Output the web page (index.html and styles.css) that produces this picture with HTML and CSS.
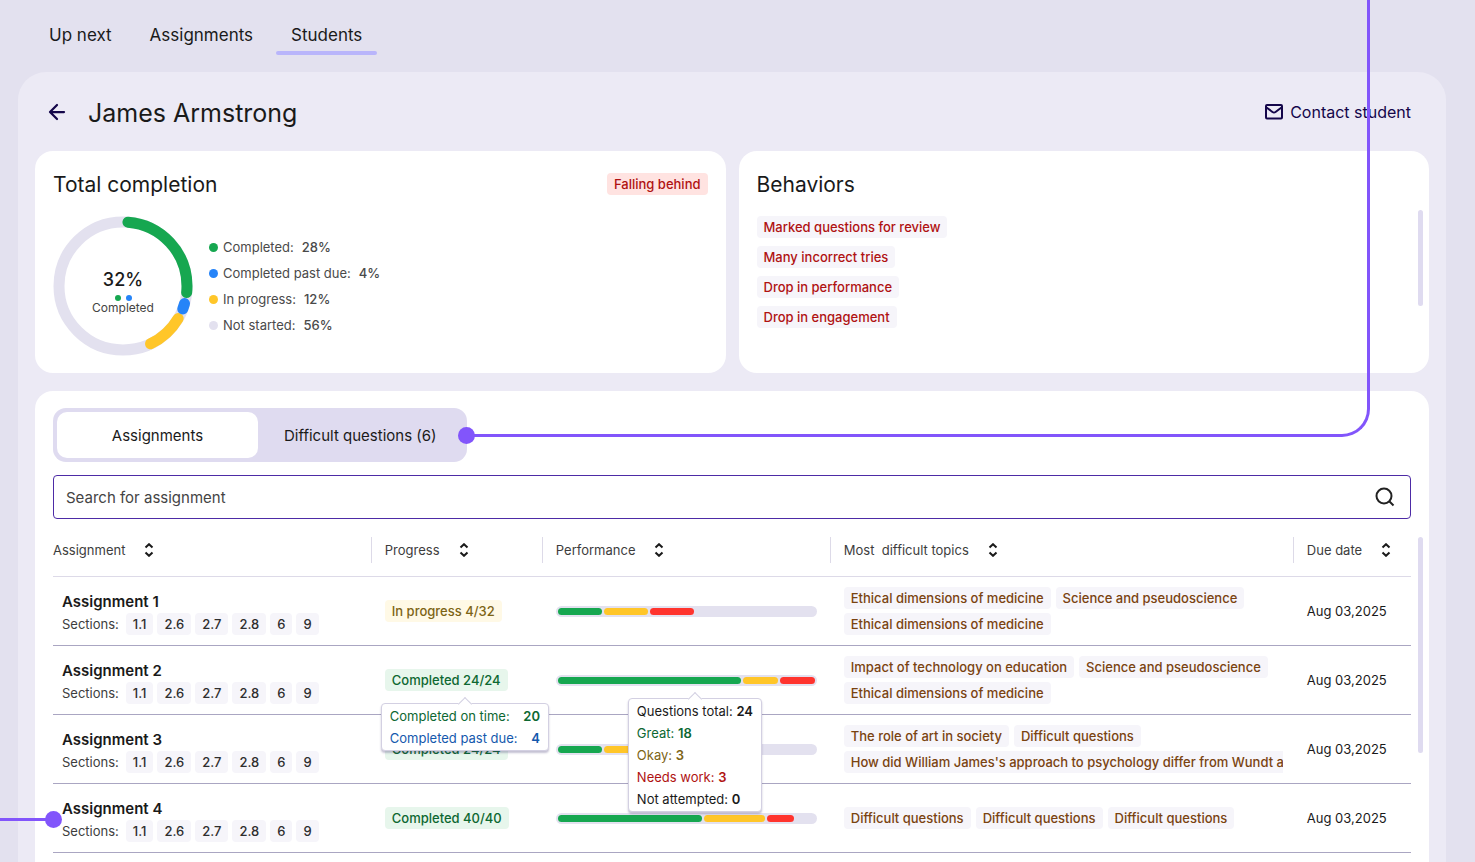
FILE: index.html
```html
<!DOCTYPE html>
<html lang="en">
<head>
    <meta charset="UTF-8">
    <meta name="viewport" content="width=device-width, initial-scale=1.0">
    <title>James Armstrong - Students</title>
    <link rel="stylesheet" href="styles.css">
</head>
<body>
    <svg class="sprite" aria-hidden="true">
        <symbol id="icon-sort" viewBox="0 0 10 14">
            <path d="M1.5 4.5 5 1.2l3.500 3.300M1.500 9.500 5 12.800l3.500-3.300" fill="none" stroke="currentColor" stroke-width="2"/>
        </symbol>
    </svg>

    <nav class="main-nav">
        <a href="#">Up next</a>
        <a href="#">Assignments</a>
        <a href="#" class="active">Students</a>
    </nav>

    <main class="panel">
        <header class="panel-header">
            <button class="back-btn" aria-label="Back">
                <svg width="18" height="18" viewBox="0 0 18 18" fill="none" stroke="currentColor" stroke-width="2.250" stroke-linecap="round" stroke-linejoin="round">
                    <path d="M16 9H2M9 2 2 9l7 7"/>
                </svg>
            </button>
            <h1>James Armstrong</h1>
            <a href="#" class="contact">
                <svg width="18" height="16" viewBox="0 0 18 16" fill="none" stroke="currentColor" stroke-width="2" stroke-linejoin="round">
                    <rect x="1" y="1" width="16" height="13.500" rx="1"/>
                    <path d="M1.500 3.500 7.500 8q1.500 1 3 0l6-4.500"/>
                </svg>
                Contact student
            </a>
        </header>

        <div class="summary">
            <section class="card">
                <div class="card-title">
                    <h2>Total completion</h2>
                    <span class="tag behind">Falling behind</span>
                </div>
                <div class="completion">
                    <div class="donut">
                        <svg width="140" height="140" viewBox="0 0 140 140" fill="none" stroke-width="11" stroke-linecap="round">
                            <circle cx="70" cy="70" r="64" stroke="#e3e1ef"/>
                            <g transform="rotate(-90 70 70)">
                                <circle cx="70" cy="70" r="64" pathLength="360" stroke="#ffc629" stroke-dasharray="34 326" stroke-dashoffset="-120.500"/>
                                <circle cx="70" cy="70" r="64" pathLength="360" stroke="#2684f8" stroke-dasharray="5 355" stroke-dashoffset="-106"/>
                                <circle cx="70" cy="70" r="64" pathLength="360" stroke="#16a750" stroke-dasharray="91.500 268.500" stroke-dashoffset="-4.500"/>
                            </g>
                        </svg>
                        <div class="donut-label">
                            <strong>32%</strong>
                            <div class="donut-dots"><i class="green"></i><i class="blue"></i></div>
                            <span>Completed</span>
                        </div>
                    </div>
                    <ul class="legend">
                        <li><i class="green"></i>Completed: <b>28%</b></li>
                        <li><i class="blue"></i>Completed past due: <b>4%</b></li>
                        <li><i class="yellow"></i>In progress: <b>12%</b></li>
                        <li><i class="grey"></i>Not started: <b>56%</b></li>
                    </ul>
                </div>
            </section>

            <section class="card">
                <div class="card-title">
                    <h2>Behaviors</h2>
                </div>
                <div class="behaviors">
                    <span class="tag">Marked questions for review</span>
                    <span class="tag">Many incorrect tries</span>
                    <span class="tag">Drop in performance</span>
                    <span class="tag">Drop in engagement</span>
                </div>
                <div class="scroll-thumb thumb-behaviors"></div>
            </section>
        </div>

        <section class="card work">
            <div class="segmented">
                <button class="selected">Assignments</button>
                <button>Difficult questions (6)</button>
            </div>

            <div class="search">
                <input type="text" placeholder="Search for assignment" aria-label="Search for assignment">
                <svg width="20" height="20" viewBox="0 0 20 20" fill="none" stroke="#222" stroke-width="2">
                    <circle cx="9" cy="9" r="7.500"/>
                    <path d="m14 14 4.500 4.500"/>
                </svg>
            </div>

            <table>
                <colgroup>
                    <col class="col-assignment">
                    <col class="col-progress">
                    <col class="col-performance">
                    <col class="col-topics">
                    <col class="col-due">
                </colgroup>
                <thead>
                    <tr>
                        <th><button class="sort">Assignment <svg><use href="#icon-sort"/></svg></button></th>
                        <th><button class="sort">Progress <svg><use href="#icon-sort"/></svg></button></th>
                        <th><button class="sort">Performance <svg><use href="#icon-sort"/></svg></button></th>
                        <th><button class="sort">Most&nbsp; difficult topics <svg><use href="#icon-sort"/></svg></button></th>
                        <th><button class="sort">Due date <svg><use href="#icon-sort"/></svg></button></th>
                    </tr>
                </thead>
                <tbody>
                    <tr>
                        <td class="assignment">
                            <h3>Assignment 1</h3>
                            <div class="sections"><span class="label">Sections:</span><span class="tag">1.1</span><span class="tag">2.6</span><span class="tag">2.7</span><span class="tag">2.8</span><span class="tag">6</span><span class="tag">9</span></div>
                        </td>
                        <td><span class="tag pending">In progress 4/32</span></td>
                        <td>
                            <div class="bar">
                                <i class="green" style="width: 17.1%"></i>
                                <i class="yellow" style="width: 17.1%"></i>
                                <i class="red" style="width: 17.1%"></i>
                            </div>
                        </td>
                        <td class="topics-cell">
                            <div class="topics">
                                <span class="tag">Ethical dimensions of medicine</span>
                                <span class="tag">Science and pseudoscience</span>
                                <span class="tag">Ethical dimensions of medicine</span>
                            </div>
                        </td>
                        <td>Aug 03,2025</td>
                    </tr>
                    <tr>
                        <td class="assignment">
                            <h3>Assignment 2</h3>
                            <div class="sections"><span class="label">Sections:</span><span class="tag">1.1</span><span class="tag">2.6</span><span class="tag">2.7</span><span class="tag">2.8</span><span class="tag">6</span><span class="tag">9</span></div>
                        </td>
                        <td>
                            <div class="anchor">
                                <span class="tag done">Completed 24/24</span>
                                <div class="tooltip tip-progress">
                                    <p class="text-green">Completed on time: <b>20</b></p>
                                    <p class="text-blue">Completed past due: <b>4</b></p>
                                </div>
                            </div>
                        </td>
                        <td>
                            <div class="anchor">
                                <div class="bar">
                                    <i class="green" style="width: 71.2%"></i>
                                    <i class="yellow" style="width: 13.6%"></i>
                                    <i class="red" style="width: 13.6%"></i>
                                </div>
                                <div class="tooltip tip-performance">
                                    <p>Questions total: <b>24</b></p>
                                    <p class="text-green">Great: <b>18</b></p>
                                    <p class="text-yellow">Okay: <b>3</b></p>
                                    <p class="text-red">Needs work: <b>3</b></p>
                                    <p>Not attempted: <b>0</b></p>
                                </div>
                            </div>
                        </td>
                        <td class="topics-cell">
                            <div class="topics">
                                <span class="tag">Impact of technology on education</span>
                                <span class="tag">Science and pseudoscience</span>
                                <span class="tag">Ethical dimensions of medicine</span>
                            </div>
                        </td>
                        <td>Aug 03,2025</td>
                    </tr>
                    <tr>
                        <td class="assignment">
                            <h3>Assignment 3</h3>
                            <div class="sections"><span class="label">Sections:</span><span class="tag">1.1</span><span class="tag">2.6</span><span class="tag">2.7</span><span class="tag">2.8</span><span class="tag">6</span><span class="tag">9</span></div>
                        </td>
                        <td><span class="tag done">Completed 24/24</span></td>
                        <td>
                            <div class="bar">
                                <i class="green" style="width: 17.1%"></i>
                                <i class="yellow" style="width: 17.1%"></i>
                                <i class="red" style="width: 17.1%"></i>
                            </div>
                        </td>
                        <td class="topics-cell">
                            <div class="topics">
                                <span class="tag">The role of art in society</span>
                                <span class="tag">Difficult questions</span>
                                <span class="tag">How did William James's approach to psychology differ from Wundt a</span>
                            </div>
                        </td>
                        <td>Aug 03,2025</td>
                    </tr>
                    <tr>
                        <td class="assignment">
                            <h3>Assignment 4</h3>
                            <div class="sections"><span class="label">Sections:</span><span class="tag">1.1</span><span class="tag">2.6</span><span class="tag">2.7</span><span class="tag">2.8</span><span class="tag">6</span><span class="tag">9</span></div>
                            <div class="callout-row"></div>
                        </td>
                        <td><span class="tag done">Completed 40/40</span></td>
                        <td>
                            <div class="bar">
                                <i class="green" style="width: 56%"></i>
                                <i class="yellow" style="width: 24%"></i>
                                <i class="red" style="width: 10.2%"></i>
                            </div>
                        </td>
                        <td class="topics-cell">
                            <div class="topics">
                                <span class="tag">Difficult questions</span>
                                <span class="tag">Difficult questions</span>
                                <span class="tag">Difficult questions</span>
                            </div>
                        </td>
                        <td>Aug 03,2025</td>
                    </tr>
                </tbody>
            </table>
            <div class="scroll-thumb thumb-table"></div>
        </section>
    </main>

    <div class="callout-tab"></div>
</body>
</html>
```

FILE: styles.css
```css
* {
    box-sizing: border-box;
}

body {
    margin: 0;
    min-height: 100vh;
    display: flex;
    flex-direction: column;
    position: relative;
    background: #e3e1ef;
    color: #1a1a1a;
    font-family: Inter, 'Open Sans', sans-serif;
    font-size: 13px;
    line-height: 22px;
}

h1, h2, h3, p, ul {
    margin: 0;
    padding: 0;
    font-weight: 400;
}

button {
    border: none;
    background: none;
    padding: 0;
    font: inherit;
    color: inherit;
    cursor: pointer;
}

a {
    color: inherit;
    text-decoration: none;
}

b {
    font-weight: 600;
}

.sprite {
    display: none;
}

/* shared colours for dots and bar segments */
.green { background: #16a750; }
.blue { background: #2684f8; }
.yellow { background: #ffc629; }
.red { background: #ff342e; }
.grey { background: #e3e1ef; }

.text-green { color: #0d6832; }
.text-blue { color: #1459ad; }
.text-yellow { color: #7d6415; }
.text-red { color: #b01212; }

.main-nav {
    display: flex;
    gap: 8px;
    padding: 22px 34px 17px;
    font-size: 17px;
    line-height: 26px;
}

.main-nav a {
    padding: 0 15px;
    position: relative;
    height: 33px;
}

.main-nav .active::after {
    content: '';
    position: absolute;
    left: 0;
    right: 0;
    bottom: 0;
    height: 4px;
    border-radius: 2px;
    background: #b9b5fb;
}

.panel {
    flex: 1;
    display: flex;
    flex-direction: column;
    margin: 0 29px 0 18px;
    padding: 0 17px;
    background: #eceaf5;
    border-radius: 28px 28px 0 0;
}

.panel-header {
    display: flex;
    align-items: center;
    height: 79px;
    padding: 4px 18px 4px 13px;
}

.back-btn, .contact {
    display: flex;
    color: #14064a;
}

h1 {
    margin-left: 22px;
    padding-top: 2px;
    font-size: 25px;
    line-height: 36px;
}

.contact {
    margin-left: auto;
    align-items: center;
    gap: 7px;
    font-size: 16px;
}

.summary {
    display: grid;
    grid-template-columns: 1fr 1fr;
    gap: 13px;
    margin-bottom: 18px;
}

.card {
    position: relative;
    padding: 17px 18px;
    background: #fff;
    border-radius: 18px;
}

.card-title {
    display: flex;
    justify-content: space-between;
    align-items: center;
    height: 32px;
}

h2 {
    padding-top: 2px;
    font-size: 21px;
    line-height: 32px;
}

.tag {
    display: inline-block;
    padding: 0 7px;
    border-radius: 4px;
    background: #f6f5fa;
    font-weight: 500;
    white-space: nowrap;
}

.behind {
    background: #ffe3e1;
    color: #b01212;
}

.completion {
    display: flex;
    gap: 16px;
    align-items: center;
    margin-top: 16px;
}

.donut {
    display: grid;
    place-items: center;
}

.donut > * {
    grid-area: 1 / 1;
}

.donut-label {
    display: flex;
    flex-direction: column;
    align-items: center;
    padding-top: 10px;
    font-size: 12px;
    line-height: 14px;
    color: #444;
}

.donut-label strong {
    font-size: 18px;
    line-height: 24px;
    font-weight: 500;
    color: #1a1a1a;
}

.donut-dots {
    display: flex;
    gap: 5px;
    margin-top: 3px;
}

.donut-dots i {
    width: 6px;
    height: 6px;
    border-radius: 50%;
}

.legend {
    list-style: none;
    color: #4a4a4a;
}

.legend li {
    display: flex;
    align-items: center;
    gap: 5px;
    line-height: 26px;
}

.legend i {
    width: 9px;
    height: 9px;
    border-radius: 50%;
}

.legend b {
    margin-left: 3px;
    font-weight: 500;
}

.behaviors {
    display: flex;
    flex-direction: column;
    align-items: flex-start;
    gap: 8px;
    margin-top: 16px;
    color: #b01212;
}

.scroll-thumb {
    position: absolute;
    right: 6px;
    width: 5px;
    border-radius: 3px;
    background: #dfdbf0;
}

.thumb-behaviors {
    top: 59px;
    height: 96px;
}

.thumb-table {
    top: 146px;
    height: 216px;
}

.work {
    flex: 1;
    padding-bottom: 8px;
    border-radius: 18px 18px 0 0;
}

.segmented {
    display: inline-flex;
    padding: 4px;
    border-radius: 13px;
    background: #dfdbf0;
    font-size: 15px;
}

.segmented button {
    min-width: 201px;
    height: 46px;
    padding: 2px 26px 0;
    border-radius: 10px;
}

.segmented .selected {
    background: #fff;
}

.search {
    display: flex;
    align-items: center;
    height: 44px;
    margin-top: 13px;
    padding: 0 15px 0 12px;
    border: 1px solid #4d2ba6;
    border-radius: 4px;
}

.search input {
    flex: 1;
    border: none;
    outline: none;
    padding: 2px 0 0;
    background: none;
    font: inherit;
    font-size: 15px;
}

.search input::placeholder {
    color: #444;
    opacity: 1;
}

table {
    width: 100%;
    table-layout: fixed;
    border-collapse: collapse;
}

.col-assignment { width: 23.4%; }
.col-progress { width: 12.6%; }
.col-performance { width: 21.2%; }
.col-topics { width: 34.1%; }
.col-due { width: 8.7%; }

th {
    padding: 18px 0 13px;
    border-bottom: 1px solid #dddae8;
    text-align: left;
    font-weight: 400;
    color: #3d3d3d;
}

.sort {
    display: flex;
    align-items: center;
    gap: 19px;
    height: 26px;
    white-space: nowrap;
}

.sort svg {
    width: 10px;
    height: 14px;
    color: #1a1a1a;
}

th + th .sort {
    padding-left: 13px;
    border-left: 1px solid #dddae8;
}

td {
    height: 69px;
    padding: 0 13px 0 14px;
    border-bottom: 1px solid #aaa6c2;
}

td:last-child {
    padding-right: 0;
}

.topics-cell {
    padding-right: 10px;
}

.assignment {
    position: relative;
    padding: 3px 0 0 9px;
}

h3 {
    font-size: 15px;
    font-weight: 600;
}

.sections {
    display: flex;
    gap: 4px;
    color: #3d3d3d;
}

.sections .label {
    margin-right: 3px;
}

.sections .tag {
    color: #2e2e2e;
}

.pending {
    background: #fff9e6;
    color: #7d6415;
}

.done {
    background: #e7f6ec;
    color: #0d6832;
}

.bar {
    display: flex;
    gap: 2px;
    height: 11px;
    padding: 2px;
    border-radius: 6px;
    background: #e3e1ef;
}

.bar i {
    border-radius: 4px;
}

.topics {
    display: flex;
    flex-wrap: wrap;
    gap: 4px 5px;
    overflow: hidden;
    color: #7a4310;
}

.anchor {
    position: relative;
}

.tooltip {
    position: absolute;
    z-index: 1;
    padding: 1px 8px;
    border: 1px solid #d3d0e2;
    border-radius: 4px;
    background: #fff;
    box-shadow: 0 2px 2px rgba(60, 50, 110, 0.3);
    white-space: nowrap;
}

/* little arrow on the top edge */
.tooltip::before {
    content: '';
    position: absolute;
    top: -5px;
    left: 50%;
    width: 9px;
    height: 9px;
    margin-left: -5px;
    border: solid #d3d0e2;
    border-width: 1px 0 0 1px;
    background: #fff;
    transform: rotate(45deg);
}

.tip-progress {
    top: 34px;
    left: -4px;
}

.tip-progress b {
    margin-left: 10px;
}

.tip-performance {
    top: 23px;
    left: 72px;
}

/* callout lines pointing at the tab switch and at the last row */
.callout-tab {
    position: absolute;
    top: 0;
    left: 467px;
    right: 105px;
    height: 437px;
    border: solid #8255fb;
    border-width: 0 3px 3px 0;
    border-radius: 0 0 28px 0;
    pointer-events: none;
}

.callout-row {
    position: absolute;
    top: 50%;
    left: -53px;
    width: 53px;
    height: 3px;
    background: #8255fb;
}

.callout-tab::after, .callout-row::after {
    content: '';
    position: absolute;
    width: 17px;
    height: 17px;
    border-radius: 50%;
    background: #8255fb;
}

.callout-tab::after {
    left: -9px;
    bottom: -10px;
}

.callout-row::after {
    right: -9px;
    top: -7px;
}
```
